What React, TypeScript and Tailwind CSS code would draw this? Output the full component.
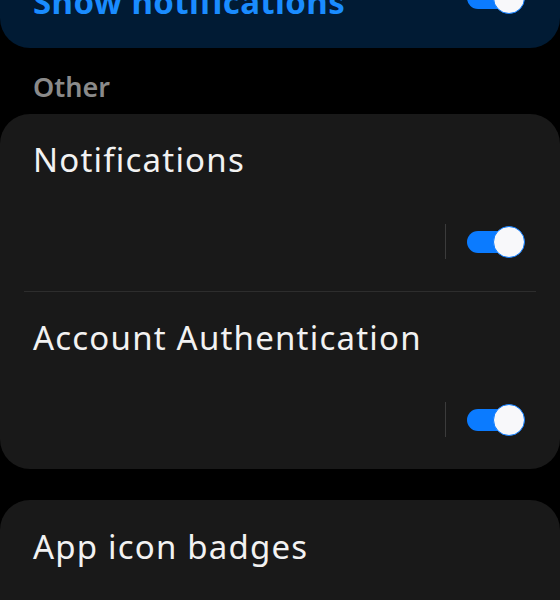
import React from "react";

const font = { fontFamily: '"Noto Sans", "Open Sans", sans-serif' };

function Toggle() {
  return (
    <div className="relative w-[58px] h-[34px] flex items-center">
      <div className="w-[50px] h-[22px] rounded-full bg-[#0b7bff]" />
      <div className="absolute right-0 top-[1px] w-[32px] h-[32px] rounded-full bg-[#f8f8fa] border-[1.5px] border-[#0b7bff]" />
    </div>
  );
}

function SettingItem({ title, divider }: { title: string; divider?: boolean }) {
  return (
    <div className="flex flex-col">
      <div className="pl-[33px] pr-[35px] pt-[26px] pb-[32px]">
        <div className="text-[33px] leading-[40px] tracking-[1.2px] text-[#f2f2f2]">{title}</div>
        <div className="flex items-center justify-end mt-[44px]">
          <div className="w-px h-[35px] bg-[#3b3b3b] mr-[21px]" />
          <Toggle />
        </div>
      </div>
      {divider && <div className="mx-[24px] h-px bg-[#2d2d2d]" />}
    </div>
  );
}

export default function App() {
  return (
    <div className="w-[560px] h-[600px] bg-black overflow-hidden" style={font}>
      <div className="-mt-[44px] bg-[#011b34] rounded-b-[30px] pl-[33px] pr-[35px] pt-[26px] pb-[26px] flex items-center justify-between">
        <div className="text-[33px] leading-[40px] font-bold tracking-[0.4px] text-[#1a8cff]">Show notifications</div>
        <div className="-mt-[8px]">
          <Toggle />
        </div>
      </div>

      <div className="pl-[33px] mt-[22px] text-[27px] leading-[34px] font-semibold text-[#8a8a8a]">Other</div>

      <div className="mt-[10px] bg-[#191919] rounded-[30px]">
        <SettingItem title="Notifications" divider />
        <SettingItem title="Account Authentication" />
      </div>

      <div className="mt-[31px] bg-[#191919] rounded-[30px] h-[140px]">
        <div className="pl-[33px] pt-[27px] text-[33px] leading-[40px] tracking-[1.2px] text-[#f2f2f2]">App icon badges</div>
      </div>
    </div>
  );
}
